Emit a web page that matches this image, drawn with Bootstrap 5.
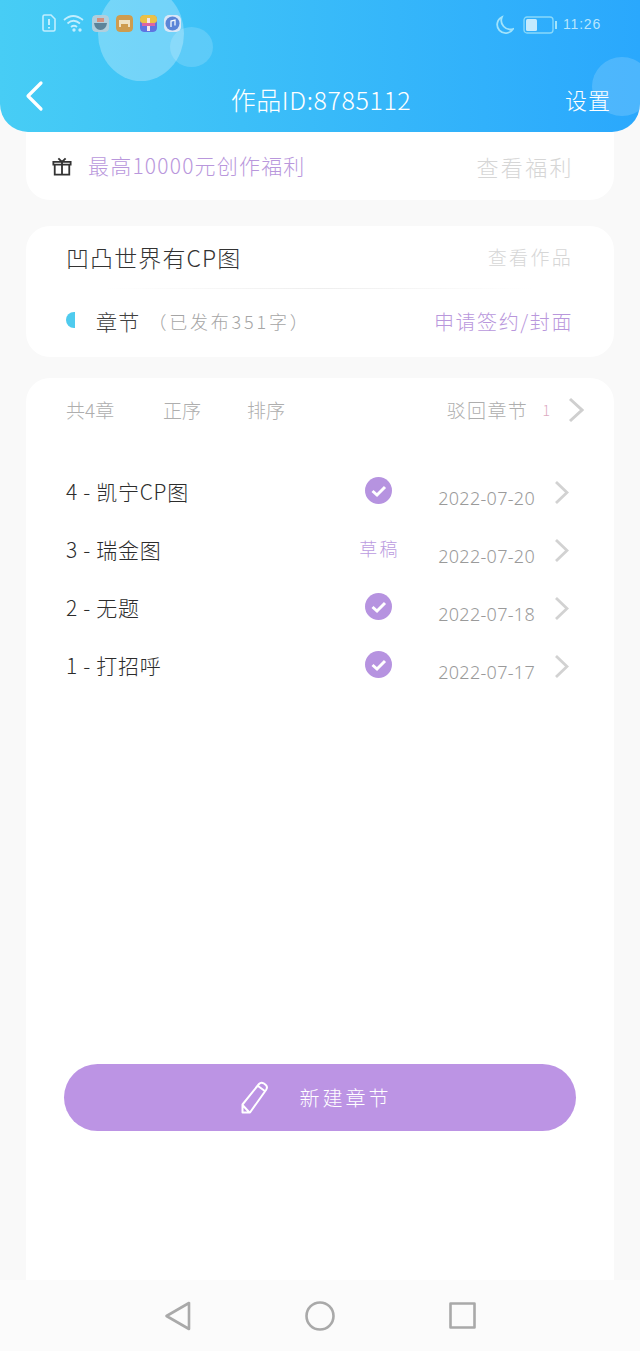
<!DOCTYPE html>
<html lang="zh">
<head>
<meta charset="utf-8">
<title>作品</title>
<link href="https://cdn.jsdelivr.net/npm/bootstrap@5.3.0/dist/css/bootstrap.min.css" rel="stylesheet">
<style>
html,body{height:1351px;overflow:hidden}
body{background:#f9f9f9;font-family:"Noto Sans CJK SC","Liberation Sans",sans-serif;font-weight:300;color:#333}
.app-top{height:132px;background:linear-gradient(90deg,#47cdf5 0%,#2aa8fd 100%);border-radius:0 0 28px 28px;position:relative;overflow:hidden;color:#fff}
.bub{position:absolute;border-radius:50%;background:rgba(255,255,255,.27)}
.bub-a{left:98px;top:-14px;width:86px;height:95px}
.bub-b{left:170px;top:27px;width:43px;height:40px;background:rgba(255,255,255,.16)}
.bub-c{left:592px;top:57px;width:60px;height:59px;background:rgba(255,255,255,.16)}
.stat{height:50px;padding:14px 39px 0 42px;position:relative;opacity:.95}
.stat-left{gap:7px}
.appic{width:17px;height:17px;border-radius:4px;display:block}
.clock{font-size:14px;letter-spacing:.8px;color:#bfeaff;margin-left:5px;font-family:"Liberation Sans",sans-serif}
.moon{margin-right:9px}
.bar-row{height:82px;padding:30px 29px 0 24px;position:relative}
.ttl{font-size:25px;line-height:1;position:absolute;left:0;right:0;top:37px;text-align:center;letter-spacing:.6px;padding-left:2px}
.set{font-size:22px;letter-spacing:1px;line-height:1;margin-top:8px}
.wrap{padding:0 26px}
.sheet{background:#fff;border-radius:24px}
.s1{height:68px;border-radius:0 0 24px 24px;padding:0 40px 0 26px}
.s2{height:131px;margin-top:26px;padding:0 41px 0 40px}
.s3{height:902px;margin-top:21px;border-radius:24px 24px 0 0;padding:0 30px 0 40px;position:relative}
.lil{color:#b997dc}
.pale{color:#d6d6d6}
.t1{font-size:21px;letter-spacing:1.2px}
.t1p{font-size:22px;letter-spacing:2.4px}
.t2{font-size:23px;letter-spacing:1.1px}
.t3{font-size:19px;letter-spacing:2.3px}
.t5{font-size:21px;letter-spacing:1.2px;color:#404040}
.t6{font-size:18px;letter-spacing:2.8px;color:#a5a5a5}
.t7{font-size:20px;letter-spacing:1.6px}
.gift{margin-right:16px}
.tick{width:9px;height:16px;background:#4fcbee;border-radius:9px 0 0 9px;display:block;margin-right:21px;margin-bottom:4px}
.hr-soft{height:1px;margin:0 0 0 -1px;background:linear-gradient(90deg,transparent 8%,#eeeeee 50%,transparent 92%)}
.r1{height:62px}
.r2{height:68px;padding-bottom:3px}
.tools{height:66px;font-size:19px;color:#aeaeae;padding-bottom:2px}
.tools span{display:block}
.c-a{width:97px}
.c-b{width:84px}
.rej{margin-left:auto;letter-spacing:1.3px}
.pink{color:#dca9bf;width:40px;text-align:right;padding-right:18px;font-size:14px}
.list-row{height:58px;padding-right:2px}
.list-zone{padding-top:19px}
.nm{width:289px;font-size:21px;color:#2c2c2c;letter-spacing:.7px;white-space:nowrap}
.st{width:46px;display:flex;justify-content:center;margin-top:-4px}
.draft{font-size:18px;letter-spacing:2.2px;color:#bb9be0;white-space:nowrap;padding-left:3px}
.dt{width:134px;text-align:right;font-size:18px;color:#9a9a9a;margin-top:12px;letter-spacing:.3px;font-family:"Noto Sans","Liberation Sans",sans-serif}
.chev{display:block;margin-left:19px}
.new-btn{position:absolute;left:38px;right:38px;top:686px;height:67px;border-radius:34px;background:#bc94e4;border:0;color:#fff;font-size:20px;letter-spacing:3px;font-weight:300;padding-right:20px}
.new-btn:hover,.new-btn:active{background:#bc94e4;color:#fff}
.pen{margin-right:32px}
.dock{height:71px;background:#fbfbfb;padding-left:164px}
.dock svg{display:block}
.dk{width:141px}
.dk-b{width:144px}
</style>
</head>
<body>
<header class="app-top">
  <span class="bub bub-a"></span><span class="bub bub-b"></span><span class="bub bub-c"></span>
  <div class="stat d-flex justify-content-between align-items-start">
    <div class="d-flex align-items-center stat-left">
      <svg width="14" height="18" viewBox="0 0 14 18"><path d="M1 2.500Q1 1 2.500 1H9L13 5V15.500Q13 17 11.500 17H2.500Q1 17 1 15.500Z" fill="none" stroke="#c7f0ff" stroke-width="1.600"/><path d="M7 5V11M7 13V14.500" stroke="#c7f0ff" stroke-width="2"/></svg>
      <svg width="22" height="18" viewBox="0 0 22 18" fill="none" stroke="#c7f0ff" stroke-width="1.800"><path d="M1 6Q10-2 20 6"/><path d="M4.500 9.500Q10.500 4 17 9.500"/><path d="M8 13Q11 10.500 14 13"/><circle cx="11" cy="16" r=".8"/><circle cx="17" cy="16" r=".8"/></svg>
      <svg class="appic" viewBox="0 0 17 17"><rect width="17" height="17" rx="4" fill="#b5cfdc"/><path d="M2 8H15Q14 15 8.500 15T2 8Z" fill="#5b7f95"/><rect x="5" y="3" width="7" height="4" fill="#d98d7a"/></svg>
      <svg class="appic" viewBox="0 0 17 17"><rect width="17" height="17" rx="4" fill="#d39a45"/><path d="M3 5H14V12H12V9H5V12H3Z" fill="#f6e3c0"/></svg>
      <svg class="appic" viewBox="0 0 17 17"><rect width="17" height="17" rx="4" fill="#5d6fe0"/><rect width="17" height="8" rx="3" fill="#f1c13f"/><rect x="7" y="3" width="3" height="13" fill="#fbe7ee"/><rect x="2" y="8" width="13" height="3" fill="#e2609f"/></svg>
      <svg class="appic" viewBox="0 0 17 17"><rect width="17" height="17" rx="5" fill="#dfe9f7"/><circle cx="8.500" cy="8.500" r="7" fill="#5a81d6"/><path d="M7 12V6L11 5V10.500" fill="none" stroke="#fff" stroke-width="1.300"/></svg>
    </div>
    <div class="d-flex align-items-center">
      <svg width="18" height="20" viewBox="0 0 18 20" class="moon"><path d="M6 2A8.500 8.500 0 1 0 17 14 9 9 0 0 1 6 2Z" fill="none" stroke="#a8e6fb" stroke-width="1.800"/></svg>
      <svg width="35" height="18" viewBox="0 0 35 18"><rect x="1" y="1" width="29" height="16" rx="3" fill="none" stroke="#8fdcfa" stroke-width="1.300"/><rect x="3" y="3" width="11" height="12" rx="1.500" fill="#cdeeff"/><rect x="32" y="5" width="2" height="8" fill="#a8e6fb"/></svg>
      <span class="clock">11:26</span>
    </div>
  </div>
  <div class="bar-row d-flex justify-content-between align-items-start">
    <svg width="20" height="32" viewBox="0 0 20 32" fill="none" stroke="#fff" stroke-width="3.200" stroke-linecap="round" stroke-linejoin="round"><path d="M17 3 4 16 17 29"/></svg>
    <div class="ttl">作品ID:8785112</div>
    <div class="set">设置</div>
  </div>
</header>
<main class="wrap">
  <section class="sheet s1 d-flex justify-content-between align-items-center">
    <div class="d-flex align-items-center">
      <svg width="20" height="21" viewBox="0 0 22 22" fill="none" stroke="#333" stroke-width="2" class="gift"><path d="M3 9H19V20H3ZM1.500 6H20.500V9H1.500ZM11 6V20M7 2 11 6 15 2"/></svg>
      <span class="lil t1">最高10000元创作福利</span>
    </div>
    <span class="pale t1p">查看福利</span>
  </section>
  <section class="sheet s2">
    <div class="r1 d-flex justify-content-between align-items-center">
      <span class="t2">凹凸世界有CP图</span>
      <span class="pale t3">查看作品</span>
    </div>
    <div class="hr-soft"></div>
    <div class="r2 d-flex justify-content-between align-items-center">
      <div class="d-flex align-items-center">
        <span class="tick"></span>
        <span class="t5 me-2">章节</span>
        <span class="t6">（已发布351字）</span>
      </div>
      <span class="lil t7">申请签约/封面</span>
    </div>
  </section>
  <section class="sheet s3">
    <div class="tools d-flex align-items-center">
      <span class="c-a">共4章</span>
      <span class="c-b">正序</span>
      <span>排序</span>
      <span class="rej">驳回章节</span>
      <span class="pink">1</span>
      <svg width="16" height="26" viewBox="0 0 16 26" fill="none" stroke="#cfcfcf" stroke-width="3"><path d="M2 2 14 13 2 24"/></svg>
    </div>
    <div class="list-zone">
      <div class="list-row d-flex align-items-center">
        <div class="nm">4 - 凯宁CP图</div>
        <div class="st"><svg width="27" height="27" viewBox="0 0 27 27"><circle cx="13.500" cy="13.500" r="13.500" fill="#b693e0"/><path d="M7.500 14 12 18 20 10" fill="none" stroke="#fff" stroke-width="3"/></svg></div>
        <div class="dt">2022-07-20</div>
        <svg class="chev" width="15" height="25" viewBox="0 0 15 25" fill="none" stroke="#d2d2d2" stroke-width="2.800"><path d="M2 2 13 12.500 2 23"/></svg>
      </div>
      <div class="list-row d-flex align-items-center">
        <div class="nm">3 - 瑞金图</div>
        <div class="st"><span class="draft">草稿</span></div>
        <div class="dt">2022-07-20</div>
        <svg class="chev" width="15" height="25" viewBox="0 0 15 25" fill="none" stroke="#d2d2d2" stroke-width="2.800"><path d="M2 2 13 12.500 2 23"/></svg>
      </div>
      <div class="list-row d-flex align-items-center">
        <div class="nm">2 - 无题</div>
        <div class="st"><svg width="27" height="27" viewBox="0 0 27 27"><circle cx="13.500" cy="13.500" r="13.500" fill="#b693e0"/><path d="M7.500 14 12 18 20 10" fill="none" stroke="#fff" stroke-width="3"/></svg></div>
        <div class="dt">2022-07-18</div>
        <svg class="chev" width="15" height="25" viewBox="0 0 15 25" fill="none" stroke="#d2d2d2" stroke-width="2.800"><path d="M2 2 13 12.500 2 23"/></svg>
      </div>
      <div class="list-row d-flex align-items-center">
        <div class="nm">1 - 打招呼</div>
        <div class="st"><svg width="27" height="27" viewBox="0 0 27 27"><circle cx="13.500" cy="13.500" r="13.500" fill="#b693e0"/><path d="M7.500 14 12 18 20 10" fill="none" stroke="#fff" stroke-width="3"/></svg></div>
        <div class="dt">2022-07-17</div>
        <svg class="chev" width="15" height="25" viewBox="0 0 15 25" fill="none" stroke="#d2d2d2" stroke-width="2.800"><path d="M2 2 13 12.500 2 23"/></svg>
      </div>
    </div>
    <button type="button" class="btn new-btn d-flex align-items-center justify-content-center">
      <svg width="27" height="33" viewBox="0 0 27 33" fill="none" stroke="#fff" stroke-width="2" stroke-linejoin="round" class="pen"><path d="M1.500 31.500V23.500L18 3Q20 .8 23 2.500L24.800 4Q27 6 25 9L9 31.500ZM1.500 24 8 31M17 5 24.500 10.500"/></svg>
      <span>新建章节</span>
    </button>
  </section>
</main>
<footer class="dock d-flex align-items-center">
  <div class="dk"><svg width="27" height="30" viewBox="0 0 27 30" fill="none" stroke="#a9a9a9" stroke-width="2.600" stroke-linejoin="round"><path d="M25 2V28L2.500 15Z"/></svg></div>
  <div class="dk-b"><svg width="30" height="30" viewBox="0 0 30 30" fill="none" stroke="#a9a9a9" stroke-width="2.600"><circle cx="15" cy="15" r="13.500"/></svg></div>
  <div class="dk"><svg width="27" height="27" viewBox="0 0 27 27" fill="none" stroke="#a9a9a9" stroke-width="2.600" stroke-linejoin="round"><rect x="1.500" y="1.500" width="24" height="24"/></svg></div>
</footer>
<script src="https://cdn.jsdelivr.net/npm/bootstrap@5.3.0/dist/js/bootstrap.bundle.min.js"></script>
</body>
</html>
